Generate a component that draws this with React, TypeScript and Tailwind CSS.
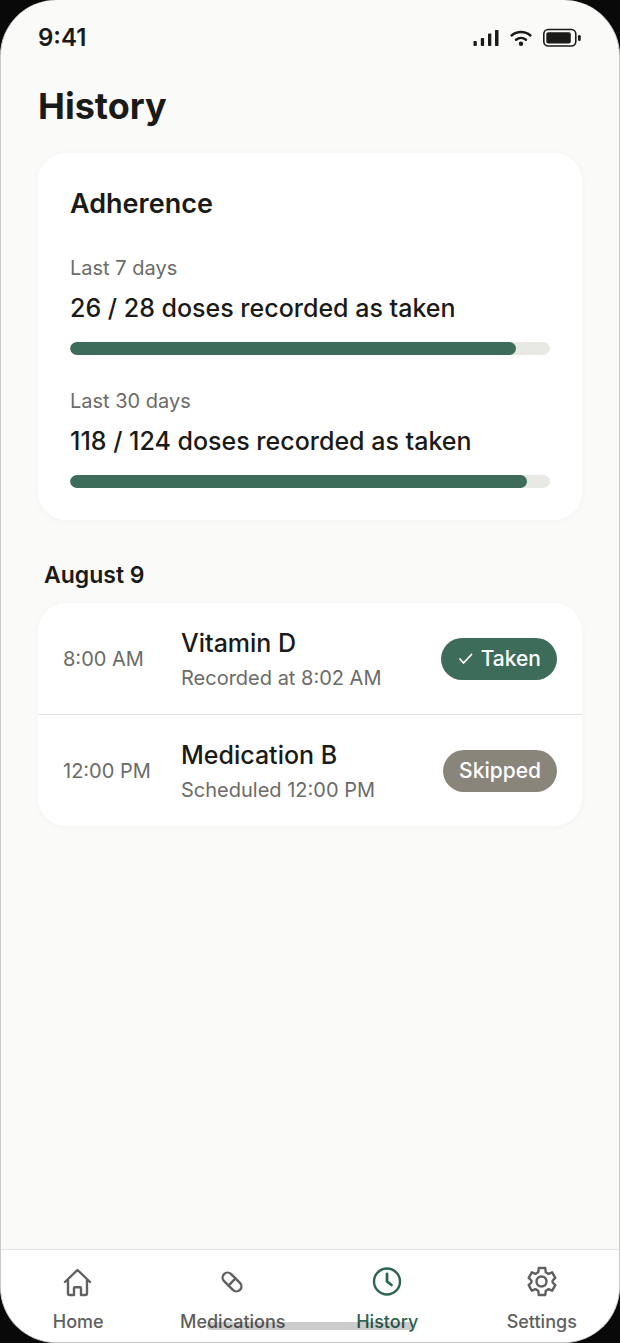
import type { ReactNode } from "react";

const periods = [
  { label: "Last 7 days", taken: 26, total: 28 },
  { label: "Last 30 days", taken: 118, total: 124 },
];

const entries = [
  { time: "8:00 AM", name: "Vitamin D", note: "Recorded at 8:02 AM", status: "taken" },
  { time: "12:00 PM", name: "Medication B", note: "Scheduled 12:00 PM", status: "skipped" },
];

function SignalIcon() {
  return (
    <svg width="26" height="18" viewBox="0 0 26 18" fill="#1a1a18" aria-hidden="true">
      <rect x="0.500" y="12" width="3.300" height="5" rx="0.800" />
      <rect x="7.800" y="9" width="3.300" height="8" rx="0.800" />
      <rect x="15" y="4.500" width="3.300" height="12.500" rx="0.800" />
      <rect x="22" y="1" width="3.500" height="16" rx="0.800" />
    </svg>
  );
}

function WifiIcon() {
  return (
    <svg width="24" height="18" viewBox="0 0 24 18" fill="none" aria-hidden="true">
      <g stroke="#1a1a18" strokeWidth="2.400" strokeLinecap="round">
        <path d="M2.600 6.500a14.500 14.500 0 0 1 18.800 0" />
        <path d="M7 10.700a8 8 0 0 1 10 0" />
      </g>
      <circle cx="12" cy="14.800" r="2.200" fill="#1a1a18" />
    </svg>
  );
}

function BatteryIcon() {
  return (
    <svg width="39" height="20" viewBox="0 0 39 20" fill="none" aria-hidden="true">
      <rect x="0.800" y="1.500" width="32" height="16.500" rx="4.500" stroke="#1a1a18" strokeWidth="1.600" />
      <rect x="3.300" y="4.200" width="24.500" height="11.200" rx="2" fill="#1a1a18" />
      <rect x="35" y="7" width="2.700" height="6" rx="1.200" fill="#1a1a18" />
    </svg>
  );
}

function TabIcon({ children }: { children: ReactNode }) {
  return (
    <svg
      width="32"
      height="32"
      viewBox="0 0 32 32"
      fill="none"
      stroke="currentColor"
      strokeWidth="2.400"
      strokeLinecap="round"
      strokeLinejoin="round"
      aria-hidden="true"
    >
      {children}
    </svg>
  );
}

const tabs = [
  {
    label: "Home",
    icon: (
      <path d="M3 16 15.500 4 28 16M6 13.500V27.500q0 1.500 1.500 1.500h4.500V22q0-.8.800-.8h5.400q.8 0 .8.800v7h4.500q1.500 0 1.500-1.500V13.500" />
    ),
  },
  {
    label: "Medications",
    icon: (
      <g transform="rotate(45 15 16)">
        <rect x="3.800" y="11" width="22.400" height="10" rx="5" />
        <path d="M15 11v10" />
      </g>
    ),
  },
  {
    label: "History",
    icon: (
      <>
        <circle cx="16" cy="15.500" r="13" />
        <path d="M16 8v7.500l4.500 3.500" strokeWidth="2.800" />
      </>
    ),
  },
  {
    label: "Settings",
    icon: (
      <>
        <path d="M12.800 2h6.400l.6 4.300 2.800 1.600 3.600-1.600 3.100 5.500-2.700 2.700v2l2.700 2.700-3.100 5.500-3.600-1.600-2.800 1.600-.6 4.300h-6.400l-.6-4.300-2.800-1.600-3.600 1.600-3.100-5.500 2.700-2.700v-2l-2.700-2.700 3.100-5.500 3.600 1.600 2.800-1.600z" />
        <circle cx="15.500" cy="15.500" r="5" />
      </>
    ),
  },
];

function StatusPill({ status }: { status: string }) {
  if (status === "taken") {
    return (
      <span className="flex items-center gap-1.5 rounded-full bg-[#3e6c5b] px-4 py-2 text-[21px] leading-[26px] font-medium text-white">
        <svg
          width="18"
          height="16"
          viewBox="0 0 18 16"
          fill="none"
          stroke="currentColor"
          strokeWidth="1.800"
          strokeLinecap="round"
          strokeLinejoin="round"
          aria-hidden="true"
        >
          <path d="M3 8 6.500 12 14.500 3.500" />
        </svg>
        Taken
      </span>
    );
  }
  return (
    <span className="rounded-full bg-[#8a857b] px-4 py-2 text-[21px] leading-[26px] font-medium text-white">
      Skipped
    </span>
  );
}

export default function App() {
  return (
    <div className="min-h-screen bg-[#080908] font-['Inter','Liberation_Sans',sans-serif] text-[#1a1a18]">
      <div className="relative flex min-h-screen flex-col overflow-hidden rounded-[56px] border-x border-b border-[#c9c9c7] bg-[#fafaf8]">
        <header className="flex items-center justify-between px-[37px] pt-[22px]">
          <span className="text-[24px] leading-8 font-semibold">9:41</span>
          <div className="flex items-center gap-2.5">
            <SignalIcon />
            <WifiIcon />
            <BatteryIcon />
          </div>
        </header>

        <main className="flex-1 px-[37px]">
          <h1 className="mt-7 text-[36px] leading-12 font-bold">History</h1>

          <section className="mt-[23px] rounded-[28px] bg-white px-8 pt-[33px] pb-8 shadow-[0_1px_8px_rgba(0,0,0,0.03)]">
            <h2 className="text-[27px] leading-9 font-semibold">Adherence</h2>
            {periods.map((period) => (
              <div key={period.label} className="mt-8">
                <p className="text-[20px] leading-7 text-[#6b6b68]">{period.label}</p>
                <p className="mt-2 text-[25px] leading-9 font-medium">
                  {period.taken} / {period.total} doses recorded as taken
                </p>
                <div className="mt-4 h-[13px] overflow-hidden rounded-full bg-[#e8e8e4]">
                  <div
                    className="h-full rounded-full bg-[#3e6c5b]"
                    style={{ width: `${(period.taken / period.total) * 100}%` }}
                  />
                </div>
              </div>
            ))}
          </section>

          <h2 className="mt-[39px] px-1.5 text-[23px] leading-8 font-semibold">August 9</h2>
          <ul className="mt-3 divide-y divide-[#e4e4e0] rounded-[28px] bg-white shadow-[0_1px_8px_rgba(0,0,0,0.03)]">
            {entries.map((entry) => (
              <li key={entry.name} className="flex items-center px-[25px] py-5">
                <span className="w-[118px] text-[20px] leading-7 text-[#6b6b68]">{entry.time}</span>
                <div className="flex-1">
                  <p className="text-[25px] leading-10 font-medium">{entry.name}</p>
                  <p className="text-[20px] leading-[31px] text-[#6b6b68]">{entry.note}</p>
                </div>
                <StatusPill status={entry.status} />
              </li>
            ))}
          </ul>
        </main>

        <nav className="grid grid-cols-4 border-t border-[#e4e4e1] bg-white pt-4 pb-2">
          {tabs.map((tab) => (
            <a
              key={tab.label}
              href="#"
              aria-current={tab.label === "History" ? "page" : undefined}
              className={`flex flex-col items-center gap-3 text-[18px] leading-6 font-medium ${
                tab.label === "History" ? "text-[#2f6453]" : "text-[#60605e]"
              }`}
            >
              <TabIcon>{tab.icon}</TabIcon>
              {tab.label}
            </a>
          ))}
        </nav>

        {/* Home indicator */}
        <div className="pointer-events-none absolute inset-x-0 bottom-3 mx-auto h-2 w-1/3 rounded-full bg-black/20" />
      </div>
    </div>
  );
}
